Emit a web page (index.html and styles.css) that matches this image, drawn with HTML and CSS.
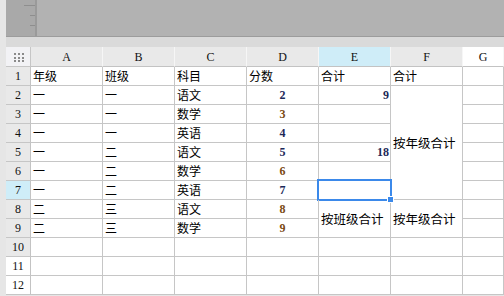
FILE: index.html
```html
<!DOCTYPE html>
<html lang="zh-CN">
<head>
<meta charset="UTF-8">
<title>合计</title>
<link rel="stylesheet" href="styles.css">
</head>
<body>
<div class="frame">
    <div class="ruler">
        <svg width="30" height="36" viewBox="0 0 30 36">
            <rect x="18" y="5" width="11" height="1" fill="#8e8e8e"/>
            <rect x="24" y="15" width="5" height="1" fill="#8e8e8e"/>
            <rect x="24" y="25" width="5" height="1" fill="#8e8e8e"/>
        </svg>
    </div>
    <div class="canvas"></div>
</div>
<div class="strip"></div>

<div class="sheet">
    <!-- header -->
    <div class="corner">
        <svg width="12" height="10" viewBox="0 0 12 10">
            <g fill="#8a8a8a">
                <rect x="0" y="0" width="2" height="2"/><rect x="4" y="0" width="2" height="2"/><rect x="8" y="0" width="2" height="2"/>
                <rect x="0" y="4" width="2" height="2"/><rect x="4" y="4" width="2" height="2"/><rect x="8" y="4" width="2" height="2"/>
                <rect x="0" y="7" width="2" height="2"/><rect x="4" y="7" width="2" height="2"/><rect x="8" y="7" width="2" height="2"/>
            </g>
        </svg>
    </div>
    <div class="col-head">A</div>
    <div class="col-head">B</div>
    <div class="col-head">C</div>
    <div class="col-head">D</div>
    <div class="col-head active">E</div>
    <div class="col-head">F</div>
    <div class="col-head blank">G</div>

    <!-- row 1 -->
    <div class="row-head">1</div>
    <div class="cell">年级</div>
    <div class="cell">班级</div>
    <div class="cell">科目</div>
    <div class="cell">分数</div>
    <div class="cell">合计</div>
    <div class="cell">合计</div>
    <div class="cell"></div>

    <!-- row 2 -->
    <div class="row-head">2</div>
    <div class="cell">一</div>
    <div class="cell">一</div>
    <div class="cell">语文</div>
    <div class="cell num cool">2</div>
    <div class="cell num-right">9</div>
    <div class="cell merged span-6">按年级合计</div>
    <div class="cell"></div>

    <!-- row 3 -->
    <div class="row-head">3</div>
    <div class="cell">一</div>
    <div class="cell">一</div>
    <div class="cell">数学</div>
    <div class="cell num warm">3</div>
    <div class="cell"></div>
    <div class="cell"></div>

    <!-- row 4 -->
    <div class="row-head">4</div>
    <div class="cell">一</div>
    <div class="cell">一</div>
    <div class="cell">英语</div>
    <div class="cell num cool">4</div>
    <div class="cell"></div>
    <div class="cell"></div>

    <!-- row 5 -->
    <div class="row-head">5</div>
    <div class="cell">一</div>
    <div class="cell">二</div>
    <div class="cell">语文</div>
    <div class="cell num cool">5</div>
    <div class="cell num-right">18</div>
    <div class="cell"></div>

    <!-- row 6 -->
    <div class="row-head">6</div>
    <div class="cell">一</div>
    <div class="cell">二</div>
    <div class="cell">数学</div>
    <div class="cell num warm">6</div>
    <div class="cell"></div>
    <div class="cell"></div>

    <!-- row 7 -->
    <div class="row-head active">7</div>
    <div class="cell">一</div>
    <div class="cell">二</div>
    <div class="cell">英语</div>
    <div class="cell num cool">7</div>
    <div class="cell selected"><span class="handle"></span></div>
    <div class="cell"></div>

    <!-- row 8 -->
    <div class="row-head">8</div>
    <div class="cell">二</div>
    <div class="cell">三</div>
    <div class="cell">语文</div>
    <div class="cell num warm">8</div>
    <div class="cell merged span-2">按班级合计</div>
    <div class="cell merged span-2">按年级合计</div>
    <div class="cell"></div>

    <!-- row 9 -->
    <div class="row-head">9</div>
    <div class="cell">二</div>
    <div class="cell">三</div>
    <div class="cell">数学</div>
    <div class="cell num warm">9</div>
    <div class="cell"></div>

    <!-- row 10 -->
    <div class="row-head">10</div>
    <div class="cell"></div><div class="cell"></div><div class="cell"></div>
    <div class="cell"></div><div class="cell"></div><div class="cell"></div><div class="cell"></div>

    <!-- row 11 -->
    <div class="row-head blank">11</div>
    <div class="cell"></div><div class="cell"></div><div class="cell"></div>
    <div class="cell"></div><div class="cell"></div><div class="cell"></div><div class="cell"></div>

    <!-- row 12 -->
    <div class="row-head blank">12</div>
    <div class="cell"></div><div class="cell"></div><div class="cell"></div>
    <div class="cell"></div><div class="cell"></div><div class="cell"></div><div class="cell"></div>
</div>
</body>
</html>
```

FILE: styles.css
```css
body {
    margin: 0;
    padding-left: 6px;
    background-color: #e6e6e6;
    font-family: "Noto Sans CJK SC", "Liberation Sans", sans-serif;
    font-size: 12px;
    color: #000;
    height: 296px;
    overflow: hidden;
}
.frame {
    display: flex;
    height: 37px;
    box-sizing: border-box;
    border-bottom: 1px solid #9c9c9c;
}
.ruler {
    width: 31px;
    box-sizing: border-box;
    background-color: #a9a9a9;
    border-right: 2px solid #9a9a9a;
}
.ruler svg {
    display: block;
}
.canvas {
    flex: 1;
    background-color: #b2b2b2;
}
.strip {
    height: 10px;
    background-color: #dadada;
}
.sheet {
    display: grid;
    grid-template-columns: 25px repeat(6, 72px) 1fr;
    grid-template-rows: 20px;
    grid-auto-rows: 19px;
    background-color: #fff;
}
.sheet > div {
    box-sizing: border-box;
    border-right: 1px solid #c6c6c6;
    border-bottom: 1px solid #c6c6c6;
    white-space: nowrap;
    overflow: visible;
}
.corner {
    background-color: #f2f2f5;
    display: flex;
    align-items: center;
    justify-content: center;
    padding-left: 3px;
    padding-top: 2px;
}
.corner svg {
    display: block;
}
.col-head,
.row-head {
    font-family: "Liberation Serif", "Noto Sans CJK SC", serif;
    font-size: 12px;
    background-color: #e9e9e9;
    display: flex;
    align-items: center;
    justify-content: center;
    color: #111;
}
.col-head {
    border-right-color: #f6f6f6 !important;
    border-bottom-color: #c3c3c3 !important;
    padding-top: 1px;
}
.row-head {
    border-right-color: #c3c3c3 !important;
    padding-top: 1px;
}
.col-head.active,
.row-head.active {
    background-color: #cfedf8;
}
.col-head.blank,
.row-head.blank {
    background-color: #fff;
}
.cell {
    padding-left: 2px;
    line-height: 18px;
    position: relative;
}
.num,
.num-right {
    font-family: "Liberation Serif", serif;
    font-weight: bold;
}
.num {
    text-align: center;
    padding-left: 0;
}
.num-right {
    text-align: right;
    padding-right: 1px;
}
.num.warm {
    color: #7a4a12;
}
.num.cool {
    color: #1c2858;
}
.num-right {
    color: #1c2858;
}
.merged {
    display: flex;
    align-items: center;
    font-size: 12.5px;
}
.span-6 {
    grid-row: span 6;
}
.span-2 {
    grid-row: span 2;
}
.selected::after {
    content: "";
    position: absolute;
    top: -2px;
    left: -2px;
    right: -2px;
    bottom: -2px;
    border: 2px solid #3b89ea;
    pointer-events: none;
}
.handle {
    position: absolute;
    right: -4px;
    bottom: -4px;
    width: 5px;
    height: 5px;
    background-color: #3b89ea;
    border: 1px solid #fff;
    z-index: 2;
}
```
